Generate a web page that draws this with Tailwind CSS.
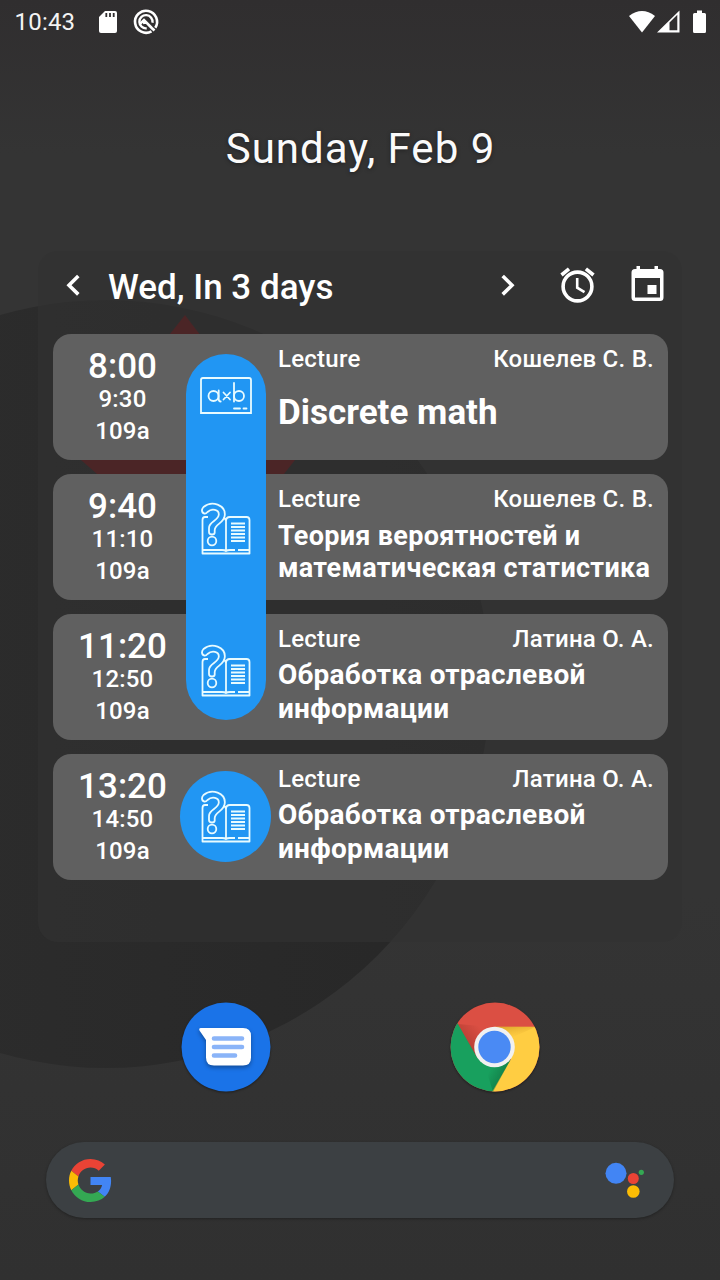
<!DOCTYPE html>
<html lang="en">
<head>
<meta charset="utf-8">
<title>Schedule widget</title>
<script src="https://cdn.jsdelivr.net/npm/@tailwindcss/browser@4"></script>
</head>
<body class="bg-[#333333] text-white font-['Roboto',sans-serif]">
<div class="relative isolate flex h-[1280px] w-[720px] flex-col overflow-hidden">

  <!-- wallpaper -->
  <svg class="absolute inset-0 -z-10" width="720" height="1280" viewBox="0 0 720 1280">
    <defs>
      <linearGradient id="bg" x1="0" y1="0" x2="0" y2="1"><stop offset="0" stop-color="#302e2f"/><stop offset=".12" stop-color="#343434"/><stop offset=".7" stop-color="#343434"/><stop offset="1" stop-color="#303030"/></linearGradient>
      <linearGradient id="disc" x1="0" y1="0" x2="1" y2="0"><stop offset="0" stop-color="#2e2e2e"/><stop offset="1" stop-color="#272727"/></linearGradient>
    </defs>
    <rect width="720" height="1280" fill="url(#bg)"/>
    <circle cx="106" cy="684" r="384" fill="url(#disc)"/>
    <path d="M185 315L295 460L284 474H97L81 460L170 334Z" fill="#701216"/>
  </svg>

  <!-- status bar -->
  <header class="flex h-[44px] shrink-0 items-center justify-between pl-[14.500px] pr-[13px]">
    <div class="flex items-center">
      <span class="w-[83px] text-[24px] leading-[44px] tracking-[0.200px] text-[#f4f4f4]">10:43</span>
      <svg width="20" height="24" viewBox="0 0 20 24"><path d="M7 1H17Q19 1 19 3V21Q19 23 17 23H3Q1 23 1 21V7Z" fill="#fff"/><path d="M8.3 3v4M12 3v4M15.7 3v4" stroke="#302e2f" stroke-width="1.8"/></svg>
      <svg class="ml-[14px]" width="28" height="28" viewBox="0 0 28 28" fill="none" stroke="#fff"><path d="M19.500 23.300A11 11 0 1 1 23.300 19.700" stroke-width="2.600"/><path d="M14.700 20.300A6.600 6.600 0 1 1 20.500 14.800" stroke-width="2.400"/><path d="M8.300 15.700L12 12L20 20.200L22.500 22.500M11.700 12L12.500 16" stroke-width="2.600"/></svg>
    </div>
    <div class="flex items-center">
      <svg width="28" height="24" viewBox="0 0 28 24"><path d="M1 6Q14 -4 27 6L14 22.5Z" fill="#fff"/></svg>
      <svg class="ml-[1px]" width="24" height="24" viewBox="0 0 24 24"><path fill-rule="evenodd" d="M0 22.500L22.500 0.500V22.500ZM12.500 12.500V20.300H20.300V4.800Z" fill="#fff"/></svg>
      <svg class="ml-[11px]" width="15" height="24" viewBox="0 0 15 24"><path d="M5 .5h5v2.500h2.500Q14 3 14 4.500V21.500Q14 23 12.500 23H2.500Q1 23 1 21.500V4.500Q1 3 2.500 3H5Z" fill="#fff"/></svg>
    </div>
  </header>

  <h1 class="mt-[77px] h-[56px] shrink-0 pl-[1px] text-center text-[42px] leading-[56px] tracking-[1px] text-[#fafafa] [text-shadow:0_1px_4px_rgba(0,0,0,.4)]">Sunday, Feb 9</h1>

  <!-- schedule widget -->
  <main class="mx-[38px] mt-[74px] h-[691px] shrink-0 rounded-[20px] bg-[#323232]/60 pl-[15px] pr-[14px]">
    <div class="flex h-[83px] items-center">
      <svg class="mt-[-15px] ml-[11px] w-[20px]" width="20" height="28" viewBox="0 0 20 28" fill="none" stroke="#fff" stroke-width="3.600"><path d="M14.300 5L5 14.200L14.300 23.400"/></svg>
      <h2 class="ml-[24px] mt-[-10px] w-[389px] whitespace-nowrap text-[35px] font-medium leading-[44px]">Wed, In 3 days</h2>
      <svg class="mt-[-15px]" width="20" height="28" viewBox="0 0 20 28" fill="none" stroke="#fff" stroke-width="3.600"><path d="M5.700 5L15 14.200L5.700 23.400"/></svg>
      <svg class="ml-[40px] mt-[-15px]" width="40" height="40" viewBox="0 0 40 40" fill="none" stroke="#fff"><circle cx="20.500" cy="21.500" r="14.400" stroke-width="3.600"/><path d="M4.500 10L12 3.800M28.900 3.800L36.500 10" stroke-width="3.600"/><path d="M20.200 13V22.700L27.500 27.200" stroke-width="2.600"/></svg>
      <svg class="ml-[30px] mt-[-15px]" width="40" height="40" viewBox="0 0 40 40"><path fill-rule="evenodd" d="M9.500 1H13V4H27.500V1H31V4H33Q36.500 4 36.500 7.500V32.500Q36.500 36 33 36H8Q4.500 36 4.500 32.500V7.500Q4.500 4 8 4H9.500ZM8 13V32.500H33V13ZM20.500 20H29.500V29H20.500Z" fill="#fff"/></svg>
    </div>

    <section class="relative flex flex-col gap-[14px]">
      <!-- joined background for consecutive lectures -->
      <div class="absolute left-[132.500px] top-[20px] h-[366px] w-[80.500px] rounded-full bg-[#2196f3]"></div>

      <article class="flex h-[126px] rounded-[18px] bg-[#606060]">
        <div class="flex w-[139px] flex-col items-center pt-[13px] font-medium"><b class="text-[35px] font-medium leading-[40px]">8:00</b><span class="text-[24px] leading-[24px] tracking-[0.200px]">9:30</span><span class="mt-[4px] text-[24px] leading-[32px] tracking-[0.200px]">109a</span></div>
        <svg class="z-10 mt-[34px] ml-[5.500px] h-[56px] w-[56px]" viewBox="0 0 56 56" fill="none" stroke="#e8fbff" stroke-width="1.800" stroke-linecap="round"><path d="M3 45V12Q3 10 5 10H51Q53 10 53 12V45Z"/><circle cx="15.500" cy="28" r="5"/><path d="M20.700 22.500V31Q20.700 33.500 22.700 33.500M25.500 24.500L32 31.500M32 24.500L25.500 31.500M36 15V33.500"/><circle cx="41" cy="28" r="5"/><path d="M36 40.500H42M45.500 40.500H48.500"/></svg>
        <div class="ml-[24.500px] flex-1 pr-[14px] pt-[9px]"><div class="flex justify-between text-[24px] font-medium leading-[32px] tracking-[0.250px]"><span>Lecture</span><span>Кошелев С. В.</span></div><h3 class="mt-[15.500px] text-[35px] font-bold leading-[44px]">Discrete math</h3></div>
      </article>

      <article class="flex h-[126px] rounded-[18px] bg-[#606060]">
        <div class="flex w-[139px] flex-col items-center pt-[13px] font-medium"><b class="text-[35px] font-medium leading-[40px]">9:40</b><span class="text-[24px] leading-[24px] tracking-[0.200px]">11:10</span><span class="mt-[4px] text-[24px] leading-[32px] tracking-[0.200px]">109a</span></div>
        <svg class="z-10 mt-[26.500px] ml-[5.500px] h-[56px] w-[56px]" viewBox="0 0 56 56" fill="none" stroke="#e8fbff" stroke-width="1.800" stroke-linejoin="round"><g id="book"><path d="M10 16H7Q4.500 16 4.500 19V52.500H51.500V19Q51.500 16 48.500 16H32Q28 16 28 20Q28 17.500 25.500 17M28 20V50Q27 49 24 49H4.500M28 50Q29 49 32 49H37M40 49H51.500"/><path d="M33 22.500H47M33 26H47M33 29.500H47M33 33H47M33 36.500H47M33 40H47"/><path d="M6.500 12.700C3 11.500 3.600 8 5.500 6C14 -1 27.500 4 26.800 14C26.300 22.500 17 22.500 16.700 29V31.500Q16.700 33.500 14 33.500Q11 33.500 11 31V27C11 20 20.500 20 20.800 13.500C21 8.500 14 6.800 9.500 11Q8 12.900 6.500 12.700Z"/><circle cx="14" cy="40" r="4.300"/></g></svg>
        <div class="ml-[24.500px] flex-1 pr-[14px] pt-[9px]"><div class="flex justify-between text-[24px] font-medium leading-[32px] tracking-[0.250px]"><span>Lecture</span><span>Кошелев С. В.</span></div><h3 class="mt-[5px] whitespace-nowrap text-[27px] font-bold leading-[32px] tracking-[0.300px]">Теория вероятностей и<br>математическая статистика</h3></div>
      </article>

      <article class="flex h-[126px] rounded-[18px] bg-[#606060]">
        <div class="flex w-[139px] flex-col items-center pt-[13px] font-medium"><b class="text-[35px] font-medium leading-[40px]">11:20</b><span class="text-[24px] leading-[24px] tracking-[0.200px]">12:50</span><span class="mt-[4px] text-[24px] leading-[32px] tracking-[0.200px]">109a</span></div>
        <svg class="z-10 mt-[29px] ml-[5.500px] h-[56px] w-[56px]" viewBox="0 0 56 56" fill="none" stroke="#e8fbff" stroke-width="1.800" stroke-linejoin="round"><use href="#book"/></svg>
        <div class="ml-[24.500px] flex-1 pr-[14px] pt-[9px]"><div class="flex justify-between text-[24px] font-medium leading-[32px] tracking-[0.250px]"><span>Lecture</span><span>Латина О. А.</span></div><h3 class="mt-[3px] whitespace-nowrap text-[28px] font-bold leading-[34px] tracking-[0.250px]">Обработка отраслевой<br>информации</h3></div>
      </article>

      <article class="flex h-[126px] rounded-[18px] bg-[#606060]">
        <div class="flex w-[127px] flex-col items-center pt-[13px] pl-[12px] font-medium"><b class="text-[35px] font-medium leading-[40px]">13:20</b><span class="text-[24px] leading-[24px] tracking-[0.200px]">14:50</span><span class="mt-[4px] text-[24px] leading-[32px] tracking-[0.200px]">109a</span></div>
        <div class="mt-[17px] flex h-[91px] w-[91px] items-center justify-center rounded-full bg-[#2196f3]">
          <svg class="h-[56px] w-[56px]" viewBox="0 0 56 56" fill="none" stroke="#e8fbff" stroke-width="1.800" stroke-linejoin="round"><use href="#book"/></svg>
        </div>
        <div class="ml-[7px] flex-1 pr-[14px] pt-[9px]"><div class="flex justify-between text-[24px] font-medium leading-[32px] tracking-[0.250px]"><span>Lecture</span><span>Латина О. А.</span></div><h3 class="mt-[3px] whitespace-nowrap text-[28px] font-bold leading-[34px] tracking-[0.250px]">Обработка отраслевой<br>информации</h3></div>
      </article>
    </section>
  </main>

  <!-- app shortcuts -->
  <nav class="mt-[60px] flex h-[90px] shrink-0 justify-between pl-[180.500px] pr-[180.500px]">
    <svg class="overflow-visible drop-shadow-[0_1px_1px_rgba(0,0,0,.4)]" width="90" height="90" viewBox="0 0 90 90"><circle cx="45" cy="45" r="44.500" fill="#1a73e8"/><path class="drop-shadow-[0_2px_2px_rgba(0,0,0,.35)]" d="M20 26H62Q70 26 70 34V55.500Q70 63.500 62 63.500H33Q25 63.500 25 55.500V38L18.500 28.500Q17.500 26 20 26Z" fill="#fff"/><path d="M33 36.500H61M33 45H61M33 53.500H54" stroke="#8ab4f8" stroke-width="4.600" stroke-linecap="round"/></svg>
    <svg class="overflow-visible drop-shadow-[0_1px_1px_rgba(0,0,0,.4)]" width="90" height="90" viewBox="0 0 90 90">
      <defs><clipPath id="round"><circle cx="45" cy="45" r="44.500"/></clipPath>
      <linearGradient id="rs" gradientUnits="userSpaceOnUse" x1="17" y1="42" x2="33" y2="29"><stop offset="0" stop-color="#8a2a20" stop-opacity=".4"/><stop offset="1" stop-color="#8a2a20" stop-opacity="0"/></linearGradient>
      <linearGradient id="ys" gradientUnits="userSpaceOnUse" x1="60" y1="24" x2="62" y2="36"><stop offset="0" stop-color="#a5670a" stop-opacity=".35"/><stop offset="1" stop-color="#d99a20" stop-opacity="0"/></linearGradient>
      <linearGradient id="gs" gradientUnits="userSpaceOnUse" x1="56" y1="72" x2="42" y2="64"><stop offset="0" stop-color="#0b5a30" stop-opacity=".45"/><stop offset="1" stop-color="#0b5a30" stop-opacity="0"/></linearGradient></defs>
      <g clip-path="url(#round)"><rect width="90" height="90" fill="#db4f43"/><path d="M0 10L8 22L27.500 56L45 65L61 58L43 92H0Z" fill="#18a05e"/><path d="M45 24.800H90V90H42L61 57Z" fill="#ffcd42"/><path d="M8 22L26 54L31 34L42 25Z" fill="url(#rs)"/><path d="M45 24.800H86L61 36Z" fill="url(#ys)"/><path d="M61 57L43 90L35 64Z" fill="url(#gs)"/></g>
      <circle cx="44.500" cy="45" r="20.300" fill="#f1f1f1"/><circle cx="44.500" cy="45" r="16.200" fill="#4a8af4"/></svg>
  </nav>

  <!-- search bar -->
  <div class="mx-[46px] mt-[50px] flex h-[76px] shrink-0 items-center justify-between rounded-full bg-[#3c4043] pl-[23px] pr-[29px] shadow-[0_1px_3px_rgba(0,0,0,.3)]">
    <svg width="43" height="43" viewBox="0 0 48 48"><path fill="#EA4335" d="M24 9.500c3.540 0 6.710 1.220 9.210 3.600l6.850-6.850C35.900 2.380 30.470 0 24 0 14.620 0 6.510 5.380 2.560 13.220l7.980 6.190C12.430 13.720 17.740 9.500 24 9.500z"/><path fill="#4285F4" d="M46.980 24.550c0-1.570-.15-3.090-.38-4.550H24v9.020h12.940c-.58 2.960-2.260 5.480-4.780 7.180l7.730 6c4.510-4.180 7.090-10.360 7.090-17.650z"/><path fill="#FBBC05" d="M10.530 28.590c-.48-1.450-.76-2.990-.76-4.590s.27-3.140.76-4.590l-7.980-6.190C.92 16.460 0 20.120 0 24c0 3.880.92 7.540 2.560 10.780l7.970-6.190z"/><path fill="#34A853" d="M24 48c6.480 0 11.930-2.130 15.890-5.810l-7.730-6c-2.150 1.450-4.920 2.300-8.160 2.300-6.260 0-11.570-4.220-13.470-9.910l-7.980 6.190C6.510 42.620 14.620 48 24 48z"/></svg>
    <svg width="40" height="40" viewBox="0 0 40 40"><circle cx="11" cy="13.300" r="10.500" fill="#4285f4"/><circle cx="28.300" cy="18.500" r="5.500" fill="#ea4335"/><circle cx="28.300" cy="31.500" r="6.300" fill="#fbbc04"/><circle cx="36.300" cy="12.300" r="2.600" fill="#34a853"/></svg>
  </div>
</div>
</body>
</html>
